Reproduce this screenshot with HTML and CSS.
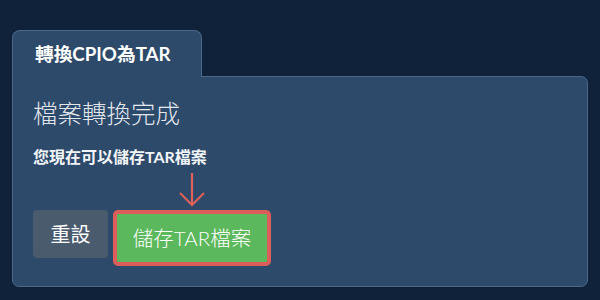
FILE: index.html
```html
<!DOCTYPE html>
<html lang="zh-Hant">
<head>
<meta charset="utf-8">
<link rel="stylesheet" href="styles.css">
</head>
<body>
<div class="card">
  <div class="tab">轉換CPIO為TAR</div>
  <div class="panel">
    <h2 class="title">檔案轉換完成</h2>
    <p class="msg">您現在可以儲存TAR檔案</p>
    <div class="actions">
      <button class="btn btn-reset">重設</button>
      <div class="save-wrap">
        <svg class="arrow" width="28" height="36" viewBox="0 0 28 36" aria-hidden="true">
          <path d="M14 1 V33 M2 21 L14 33 L26 21" fill="none" stroke="#e0605c" stroke-width="2.2"/>
        </svg>
        <button class="btn btn-save">儲存TAR檔案</button>
      </div>
    </div>
  </div>
</div>
</body>
</html>
```
FILE: styles.css
```css
html, body {
  margin: 0;
  padding: 0;
  background: #102239;
  width: 600px;
  height: 300px;
  overflow: hidden;
  font-family: Lato, "Noto Sans CJK TC", sans-serif;
}
.card {
  padding: 30px 0 0 12px;
}
.tab {
  position: relative;
  z-index: 1;
  box-sizing: border-box;
  width: 190px;
  height: 47px;
  margin-bottom: -1px;
  background: #2d4a6a;
  border: 1px solid #4b6889;
  border-bottom: none;
  border-radius: 8px 8px 0 0;
  color: #fff;
  font-weight: 700;
  font-size: 18.7px;
  line-height: 46px;
  padding-left: 22px;
}
.panel {
  box-sizing: border-box;
  width: 576px;
  height: 211px;
  background: #2d4a6a;
  border: 1px solid #4b6889;
  border-radius: 0 7px 7px 7px;
  padding: 21px 20px 0 20px;
}
.title {
  margin: 0;
  font-size: 24.5px;
  font-weight: 300;
  line-height: 32px;
  color: #e2e7ee;
}
.msg {
  margin: 17px 0 0 0;
  font-size: 16px;
  font-weight: 700;
  line-height: 20px;
  color: #f2f5f8;
}
.actions {
  display: flex;
  align-items: flex-start;
  gap: 5px;
  margin-top: 43px;
}
.btn {
  font-family: inherit;
  font-size: 20px;
  color: #fff;
  border: none;
  height: 48px;
  line-height: 48px;
  padding: 0;
  cursor: pointer;
}
.btn-reset {
  width: 75px;
  background: #4a5b6d;
  border-radius: 4px;
}
.save-wrap {
  position: relative;
  border: 4px solid #dc5d5a;
  border-radius: 5px;
}
.btn-save {
  display: block;
  width: 150px;
  font-size: 20.5px;
  font-weight: 300;
  background: #5cb85c;
  border-radius: 1px;
}
.arrow {
  position: absolute;
  left: 50%;
  margin-left: -14px;
  top: -42px;
}
```
